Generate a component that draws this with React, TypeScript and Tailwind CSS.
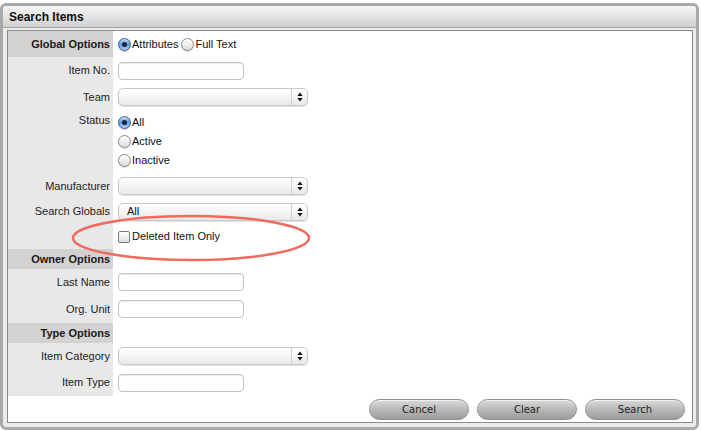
import type { ReactNode } from "react";

const font = { fontFamily: '"Liberation Sans", Arial, sans-serif' };

function Radio({ checked, label }: { checked?: boolean; label: string }) {
  return (
    <span className="inline-flex items-center">
      <span
        className={
          checked
            ? "relative inline-block h-[13px] w-[13px] rounded-full border border-[#3f5f8f] bg-gradient-to-b from-[#c4ddf7] via-[#5b9be6] to-[#a9d0fa] shadow-[0_1px_1px_rgba(0,0,0,0.2)]"
            : "relative inline-block h-[13px] w-[13px] rounded-full border border-[#8a8a8a] bg-gradient-to-b from-[#ffffff] to-[#dcdcdc] shadow-[0_1px_1px_rgba(0,0,0,0.15)]"
        }
      >
        {checked && (
          <span className="absolute left-[3px] top-[3px] h-[5px] w-[5px] rounded-full bg-[#1b2430]" />
        )}
      </span>
      <span className="ml-[1px] text-[11px] text-[#111]">{label}</span>
    </span>
  );
}

function TextInput() {
  return (
    <div className="h-[18px] w-[126px] rounded-[4px] border border-[#c4c4c4] bg-white shadow-[inset_0_1px_1px_rgba(0,0,0,0.08)]" />
  );
}

function Select({ value }: { value?: string }) {
  return (
    <div className="flex h-[18px] w-[190px] items-stretch rounded-[5px] border border-[#c8c8c8] bg-gradient-to-b from-[#ffffff] to-[#e9e9e9] shadow-[0_1px_1px_rgba(0,0,0,0.12)]">
      <div className="flex flex-1 items-center pl-[8px] text-[11px] leading-none text-[#111]">
        {value}
      </div>
      <div className="flex w-[16px] items-center justify-center border-l border-[#d0d0d0]">
        <svg width="6" height="10" viewBox="0 0 6 10" aria-hidden>
          <path d="M3 0.5 L5.6 4 L0.4 4 Z" fill="#111" />
          <path d="M3 9.5 L5.6 6 L0.4 6 Z" fill="#111" />
        </svg>
      </div>
    </div>
  );
}

function Row({
  label,
  header,
  h,
  top,
  children,
}: {
  label?: string;
  header?: boolean;
  h: string;
  top?: boolean;
  children?: ReactNode;
}) {
  return (
    <div className={`flex ${h}`}>
      <div
        className={`flex w-[105px] shrink-0 justify-end pr-[3px] text-[11px] ${
          header ? "bg-[#d2d2d2] font-bold text-[#1a1a1a]" : "bg-[#e8e8e8] text-[#222]"
        } ${top ? "items-start pt-[2px]" : "items-center"}`}
      >
        {label}
      </div>
      <div className={`flex flex-1 pl-[5px] ${top ? "flex-col pt-[3px]" : "items-center"}`}>
        {children}
      </div>
    </div>
  );
}

function Pill({ children }: { children: string }) {
  return (
    <button
      type="button"
      className="h-[21px] w-[100px] rounded-full border border-[#8c8c8c] bg-gradient-to-b from-[#dadada] via-[#b9b9b9] to-[#9b9b9b] text-[10px] text-[#222] shadow-[inset_0_1px_0_rgba(255,255,255,0.6)]"
      style={{ fontFamily: '"DejaVu Sans", Verdana, sans-serif' }}
    >
      {children}
    </button>
  );
}

export default function App() {
  return (
    <div className="h-[431px] w-[701px] bg-white pt-[3px]" style={font}>
      <div className="flex h-[427px] w-[699px] flex-col overflow-hidden rounded-[6px] border-[3px] border-[#a9a9a9] bg-[#ececec]">
        <div className="flex h-[22px] shrink-0 items-center border-b border-[#a4a4a4] bg-gradient-to-b from-[#f5f5f5] via-[#e4e4e4] to-[#cfcfcf] pl-[6px] text-[12px] font-bold text-[#111]">
          Search Items
        </div>
        <div className="relative ml-[4px] mr-[3px] mt-[2px] flex h-[393px] flex-col border border-[#8a8a8a] bg-white">
          <Row label="Global Options" header h="h-[26px]">
            <span className="flex items-center gap-[3px]">
              <Radio checked label="Attributes" />
              <Radio label="Full Text" />
            </span>
          </Row>
          <Row label="Item No." h="h-[27px]">
            <TextInput />
          </Row>
          <Row label="Team" h="h-[26px]">
            <Select />
          </Row>
          <Row label="Status" h="h-[63px]" top>
            <div className="flex h-[19px] items-center">
              <Radio checked label="All" />
            </div>
            <div className="flex h-[19px] items-center">
              <Radio label="Active" />
            </div>
            <div className="flex h-[19px] items-center">
              <Radio label="Inactive" />
            </div>
          </Row>
          <Row label="Manufacturer" h="h-[26px]">
            <Select />
          </Row>
          <Row label="Search Globals" h="h-[25px]">
            <Select value="All" />
          </Row>
          <Row h="h-[25px]">
            <span className="flex items-center">
              <span className="h-[12px] w-[12px] rounded-[2px] border border-[#7a7a7a] bg-gradient-to-b from-[#ffffff] to-[#dedede]" />
              <span className="ml-[2px] text-[11px] text-[#111]">Deleted Item Only</span>
            </span>
          </Row>
          <Row label="Owner Options" header h="h-[20px]" />
          <Row label="Last Name" h="h-[26px]">
            <TextInput />
          </Row>
          <Row label="Org. Unit" h="h-[28px]">
            <TextInput />
          </Row>
          <Row label="Type Options" header h="h-[20px]" />
          <Row label="Item Category" h="h-[26px]">
            <Select />
          </Row>
          <Row label="Item Type" h="h-[27px]">
            <TextInput />
          </Row>
          <div className="flex justify-end gap-[8px] pr-[7px] pt-[3px]">
            <Pill>Cancel</Pill>
            <Pill>Clear</Pill>
            <Pill>Search</Pill>
          </div>
          <svg
            className="pointer-events-none absolute left-[60px] top-[181px]"
            width="250"
            height="52"
            viewBox="0 0 250 52"
            aria-hidden
          >
            <ellipse
              cx="123"
              cy="26"
              rx="118"
              ry="22"
              fill="none"
              stroke="#f06a5e"
              strokeWidth="2.5"
            />
          </svg>
        </div>
      </div>
    </div>
  );
}
